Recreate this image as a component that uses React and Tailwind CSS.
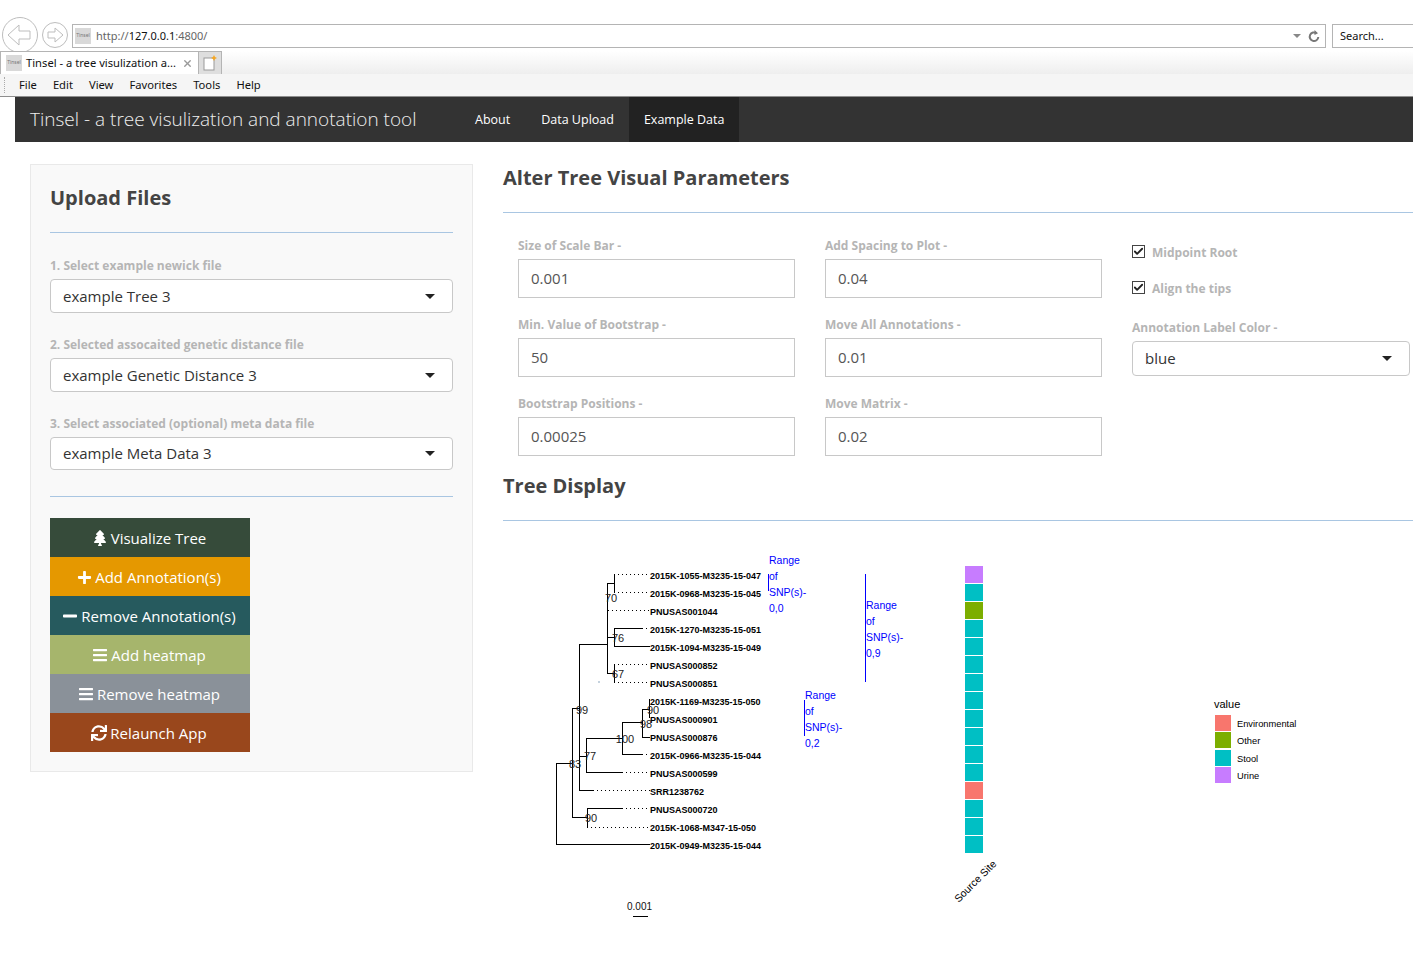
import { Check, X } from "lucide-react";
import { FaTree, FaPlus, FaMinus, FaBars, FaSync } from "react-icons/fa";

const tips = [
  ["2015K-1055-M3235-15-047", 576],
  ["2015K-0968-M3235-15-045", 594],
  ["PNUSAS001044", 612],
  ["2015K-1270-M3235-15-051", 630],
  ["2015K-1094-M3235-15-049", 648],
  ["PNUSAS000852", 666],
  ["PNUSAS000851", 684],
  ["2015K-1169-M3235-15-050", 702],
  ["PNUSAS000901", 720],
  ["PNUSAS000876", 738],
  ["2015K-0966-M3235-15-044", 756],
  ["PNUSAS000599", 774],
  ["SRR1238762", 792],
  ["PNUSAS000720", 810],
  ["2015K-1068-M347-15-050", 828],
  ["2015K-0949-M3235-15-044", 846],
];

// x1 y1 x2 y2
const solid = [
  [607, 583, 614, 583], [614, 574, 614, 592], [607, 583, 607, 673],
  [607, 637, 614, 637], [614, 628, 614, 646], [614, 628, 642, 628], [614, 646, 650, 646],
  [607, 673, 614, 673], [614, 664, 614, 682],
  [579, 644, 607, 644], [579, 644, 579, 790], [579, 790, 593, 790],
  [572, 708, 579, 708], [572, 708, 572, 817], [572, 817, 587, 817], [587, 808, 587, 827], [587, 808, 622, 808],
  [556, 763, 572, 763], [556, 763, 556, 844], [556, 844, 650, 844],
  [579, 756, 586, 756], [586, 738, 586, 772], [586, 772, 622, 772], [586, 738, 622, 738],
  [622, 722, 622, 754], [622, 754, 642, 754], [622, 722, 642, 722],
  [642, 709, 642, 737], [642, 737, 650, 737], [642, 709, 649, 709], [649, 699, 649, 718],
];

const dotted = [
  [614, 574, 650], [614, 592, 650], [608, 610, 650], [642, 628, 650], [614, 664, 650], [614, 682, 650],
  [642, 754, 650], [622, 772, 650], [593, 790, 650], [622, 808, 650], [587, 827, 650],
];

const nodes = [
  ["70", 611, 602], ["76", 618, 642], ["67", 618, 678], ["99", 582, 714], ["90", 653, 714],
  ["98", 646, 728], ["100", 625, 743], ["77", 590, 760], ["83", 575, 768], ["90", 591, 822],
];

const annotations = [
  { x: 769, y: 564, line: [574, 591], range: "0,0" },
  { x: 866, y: 609, line: [574, 682], range: "0,9" },
  { x: 805, y: 699, line: [700, 736], range: "0,2" },
];

const red = "#F8766D";
const green = "#7CAE00";
const teal = "#00BFC4";
const purple = "#C77CFF";
const heat = [purple, teal, green, teal, teal, teal, teal, teal, teal, teal, teal, teal, red, teal, teal, teal];
const legend = [["Environmental", red, 715], ["Other", green, 732], ["Stool", teal, 750], ["Urine", purple, 767]];

function Favicon() {
  return (
    <div className="w-4 h-4 bg-[#d9d9d9] flex items-center justify-center text-[5px] text-[#777] shrink-0 overflow-hidden">
      Tinsel
    </div>
  );
}

function Caret() {
  return <div className="w-0 h-0 border-x-[5px] border-t-[5px] border-x-transparent border-t-[#222]" />;
}

function BrowserChrome() {
  return (
    <div className="font-['Noto_Sans',sans-serif] text-[#111]">
      <div className="h-[51px] pt-[17px] pl-[2px] flex items-start">
        <svg width="70" height="36" viewBox="2 17 70 36" fill="none" stroke="#bdbdbd">
          <circle cx="20" cy="35" r="17.5" />
          <circle cx="55" cy="35" r="12.5" />
          <path d="M8 35 L19 25 V31 H30 V39 H19 V45 Z" />
          <path d="M63 35 L55 28 V32 H48 V38 H55 V42 Z" />
        </svg>
        <div className="mt-[7px] w-[1254px] h-[24px] border border-[#b4b4b4] flex items-center pl-[2px] pr-[5px] text-[11px]">
          <Favicon />
          <span className="ml-[5px] pt-px text-[#666]">http://</span>
          <span className="pt-px">127.0.0.1</span>
          <span className="pt-px text-[#666]">:4800/</span>
          <div className="ml-auto flex items-center gap-[7px]">
            <div className="w-0 h-0 border-x-[4px] border-t-[4px] border-x-transparent border-t-[#888]" />
            <svg width="12" height="13" viewBox="0 0 12 13" fill="none" stroke="#777" strokeWidth="2">
              <path d="M8.5 3.2 A4.3 4.3 0 1 0 10.3 7" />
              <path d="M6.5 0 L10 3.2 L6.5 5 Z" fill="#777" stroke="none" />
            </svg>
          </div>
        </div>
        <div className="mt-[7px] ml-[6px] flex-1 h-[24px] border-y border-l border-[#b4b4b4] flex items-center pl-[7px] pt-px text-[11px]">
          Search...
        </div>
      </div>
      <div className="h-[23px] flex bg-gradient-to-b from-white to-[#eeeeee]">
        <div className="w-[199px] bg-white border-x border-t border-[#b4b4b4] flex items-center pl-[5px] pr-[5px] text-[11.2px] whitespace-nowrap">
          <Favicon />
          <span className="ml-[4px]">Tinsel - a tree visulization a...</span>
          <X size={11} strokeWidth={3} className="ml-auto text-[#999]" />
        </div>
        <div className="w-[23px] bg-[#dedede] border-r border-t border-[#b4b4b4] flex items-center justify-center">
          <svg width="14" height="16" viewBox="0 0 14 16">
            <rect x="1" y="3" width="10" height="12" fill="#fff" stroke="#999" />
            <path d="M11 0 L12 2 L14 3 L12 4 L11 6 L10 4 L8 3 L10 2 Z" fill="#f5a623" />
          </svg>
        </div>
      </div>
      <div className="h-[23px] bg-[#f5f5f5] border-b border-[#8e8e8e] flex items-center text-[11.2px]">
        <div className="ml-[4px] w-px h-[16px] border-l border-dotted border-[#aaa]" />
        <div className="ml-[14px] pt-px flex gap-[16px]">
          <span>File</span>
          <span>Edit</span>
          <span>View</span>
          <span>Favorites</span>
          <span>Tools</span>
          <span>Help</span>
        </div>
      </div>
    </div>
  );
}

function Navbar() {
  return (
    <div className="ml-[15px] h-[45px] bg-[#333333] flex text-white">
      <div className="pl-[15px] w-[445px] flex items-center text-[19px] font-light text-[#eeeeee] whitespace-nowrap">
        Tinsel - a tree visulization and annotation tool
      </div>
      <div className="flex text-[12.5px]">
        <div className="px-[15px] pt-px flex items-center">About</div>
        <div className="px-[15px] pt-px flex items-center ml-px">Data Upload</div>
        <div className="px-[15px] pt-px flex items-center bg-[#222222]">Example Data</div>
      </div>
    </div>
  );
}

function SelectBox({ value, className }) {
  return (
    <div className={`px-3 bg-white border border-[#c8c8c8] rounded-[4px] flex items-center justify-between text-[15px] text-[#333] ${className || "h-[34px]"}`}>
      <span>{value}</span>
      <div className="mr-[5px]">
        <Caret />
      </div>
    </div>
  );
}

function SideField({ label, value, boxClass }) {
  return (
    <div className="mb-[23px]">
      <label className="block h-[22px] pt-px text-[12px] leading-[16px] font-bold text-[#b5b5b5]">{label}</label>
      <SelectBox value={value} className={boxClass} />
    </div>
  );
}

function ActionButton({ icon, label, color }) {
  return (
    <div className={`w-[200px] h-[39px] pt-px pr-[2px] flex items-center justify-center gap-[3px] text-[15px] text-white ${color}`}>
      {icon}
      <span>{label}</span>
    </div>
  );
}

function Sidebar() {
  return (
    <div className="w-[443px] h-[608px] shrink-0 bg-[#f9f9f9] border border-[#e9e9e9] px-[19px]">
      <div className="h-[68px] pb-[2px] border-b border-[#a9c6e2] flex items-center text-[20px] font-bold text-[#444]">
        Upload Files
      </div>
      <div className="mt-[24px]">
        <SideField label="1. Select example newick file" value="example Tree 3" />
        <SideField label="2. Selected assocaited genetic distance file" value="example Genetic Distance 3" />
        <SideField label="3. Select associated (optional) meta data file" value="example Meta Data 3" boxClass="h-[33px]" />
      </div>
      <div className="mt-[26px] h-px bg-[#a9c6e2]" />
      <div className="mt-[21px]">
        <ActionButton color="bg-[#364b3a]" label="Visualize Tree" icon={<FaTree size={16} />} />
        <ActionButton color="bg-[#e59800]" label="Add Annotation(s)" icon={<FaPlus size={15} />} />
        <ActionButton color="bg-[#265a5e]" label="Remove Annotation(s)" icon={<FaMinus size={16} />} />
        <ActionButton color="bg-[#a6b56c]" label="Add heatmap" icon={<FaBars size={16} />} />
        <ActionButton color="bg-[#8a9199]" label="Remove heatmap" icon={<FaBars size={16} />} />
        <ActionButton color="bg-[#99471c]" label="Relaunch App" icon={<FaSync size={16} />} />
      </div>
    </div>
  );
}

function SectionTitle({ children }) {
  return (
    <div className="h-[49px] border-b border-[#a9c6e2] text-[20px] leading-[28px] font-bold text-[#444]">
      {children}
    </div>
  );
}

function InputField({ label, value }) {
  return (
    <div className="mb-[18px] last:mb-[16px]">
      <label className="block h-[22px] pt-px text-[12px] leading-[16px] font-bold text-[#b5b5b5]">{label}</label>
      <div className="h-[39px] px-3 border border-[#c8c8c8] flex items-center text-[15px] text-[#555]">{value}</div>
    </div>
  );
}

function CheckRow({ label, className }) {
  return (
    <div className={`h-[16px] flex items-center gap-[7px] text-[12px] font-bold text-[#b5b5b5] ${className || ""}`}>
      <div className="w-[13px] h-[13px] -mt-[2px] border border-[#444] bg-white flex items-center justify-center">
        <Check size={11} strokeWidth={4} className="text-[#222]" />
      </div>
      <span className="pt-px">{label}</span>
    </div>
  );
}

function Params() {
  return (
    <div className="pl-[15px] pt-[24px] flex gap-[30px]">
      <div className="w-[277px]">
        <InputField label="Size of Scale Bar -" value="0.001" />
        <InputField label="Min. Value of Bootstrap -" value="50" />
        <InputField label="Bootstrap Positions -" value="0.00025" />
      </div>
      <div className="w-[277px]">
        <InputField label="Add Spacing to Plot -" value="0.04" />
        <InputField label="Move All Annotations -" value="0.01" />
        <InputField label="Move Matrix -" value="0.02" />
      </div>
      <div className="w-[278px]">
        <CheckRow label="Midpoint Root" className="mt-[7px]" />
        <CheckRow label="Align the tips" className="mt-[20px]" />
        <label className="block mt-[23px] h-[22px] pt-px text-[12px] leading-[16px] font-bold text-[#b5b5b5]">
          Annotation Label Color -
        </label>
        <SelectBox value="blue" className="h-[35px]" />
      </div>
    </div>
  );
}

function TreePlot() {
  return (
    <svg width="910" height="455" viewBox="503 521 910 455" className="block font-['Liberation_Sans',sans-serif]">
      {solid.map(([x1, y1, x2, y2], i) => (
        <line key={i} x1={x1} y1={y1} x2={x2} y2={y2} stroke="#000" shapeRendering="crispEdges" />
      ))}
      {dotted.map(([x1, y, x2], i) => (
        <line key={i} x1={x1} y1={y} x2={x2} y2={y} stroke="#000" strokeDasharray="1 3" shapeRendering="crispEdges" />
      ))}
      <rect x="598" y="681" width="2" height="2" fill="#c5d2de" />
      {tips.map(([name, y]) => (
        <text key={name} x="650" y={y + 3} fontSize="9" fontWeight="700" fill="#000">
          {name}
        </text>
      ))}
      {nodes.map(([n, x, y], i) => (
        <text key={i} x={x} y={y} fontSize="11" textAnchor="middle" fill="#222">
          {n}
        </text>
      ))}
      {annotations.map((a) => (
        <g key={a.range} fill="#0000ff" fontSize="10.5">
          <line x1={a.x - 1} y1={a.line[0]} x2={a.x - 1} y2={a.line[1]} stroke="#0000ff" shapeRendering="crispEdges" />
          <text x={a.x} y={a.y}>Range</text>
          <text x={a.x} y={a.y + 16}>of</text>
          <text x={a.x} y={a.y + 32}>SNP(s)-</text>
          <text x={a.x} y={a.y + 48}>{a.range}</text>
        </g>
      ))}
      {heat.map((c, i) => (
        <rect key={i} x="965" y={566 + i * 18} width="18" height="17" fill={c} />
      ))}
      <text x="975" y="885" fontSize="10.5" textAnchor="middle" transform="rotate(-45 975 881)" fill="#000">
        Source Site
      </text>
      <text x="639.5" y="910" fontSize="10" textAnchor="middle" fill="#111">0.001</text>
      <line x1="633" y1="916" x2="648" y2="916" stroke="#000" shapeRendering="crispEdges" />
      <text x="1214" y="708" fontSize="11" fill="#000">value</text>
      {legend.map(([name, c, y]) => (
        <g key={name}>
          <rect x="1215" y={y} width="16" height="16" fill={c} />
          <text x="1237" y={y + 12} fontSize="9.3" fill="#000">{name}</text>
        </g>
      ))}
    </svg>
  );
}

export default function App() {
  return (
    <div className="w-[1413px] h-[976px] overflow-hidden bg-white font-['Open_Sans',sans-serif]">
      <BrowserChrome />
      <Navbar />
      <div className="flex pl-[30px] pt-[22px]">
        <Sidebar />
        <div className="ml-[30px] flex-1 min-w-0">
          <SectionTitle>Alter Tree Visual Parameters</SectionTitle>
          <Params />
          <SectionTitle>Tree Display</SectionTitle>
          <TreePlot />
        </div>
      </div>
    </div>
  );
}
